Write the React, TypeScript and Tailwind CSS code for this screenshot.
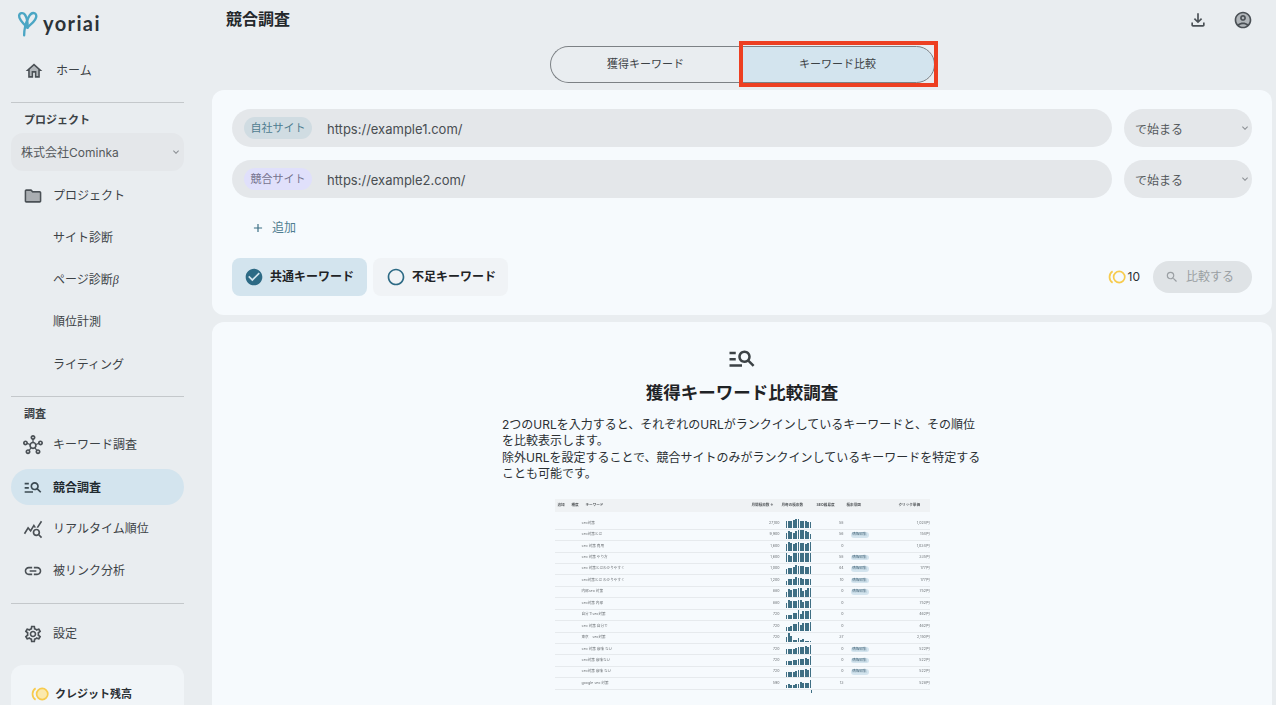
import { ReactNode } from 'react';
import {
  MdAdd,
  MdCheckCircle,
  MdExpandMore,
  MdLink,
  MdOutlineFileDownload,
  MdOutlineHub,
  MdOutlineManageSearch,
  MdOutlineQueryStats,
  MdOutlineSettings,
  MdRadioButtonUnchecked,
  MdSearch,
} from 'react-icons/md';

function HomeIcon() {
  return (
    <svg viewBox="0 0 24 24" className="w-[20px] h-[20px]" fill="#4a5055">
      <path opacity=".35" d="M12 5.69l-5 4.5V18h2v-6h6v6h2v-7.81z" />
      <path d="M12 3L2 12h3v8h6v-6h2v6h6v-8h3L12 3zm5 15h-2v-6H9v6H7v-7.81l5-4.5 5 4.5V18z" />
    </svg>
  );
}

function FolderIcon() {
  return (
    <svg viewBox="0 0 24 24" className="w-[20px] h-[20px]" fill="#4a5055">
      <path opacity=".4" d="M11.17 8l-.58-.59L9.17 6H4v12h16V8h-8z" />
      <path d="M20 6h-8l-2-2H4c-1.1 0-1.99.9-1.99 2L2 18c0 1.1.9 2 2 2h16c1.1 0 2-.9 2-2V8c0-1.1-.9-2-2-2zm0 12H4V6h5.17l1.41 1.41.59.59H20v10z" />
    </svg>
  );
}

function AccountIcon() {
  return (
    <svg viewBox="0 0 24 24" className="w-[20px] h-[20px]" fill="#4a5055">
      <circle cx="12" cy="12" r="9" opacity=".35" />
      <path d="M12 2C6.48 2 2 6.48 2 12s4.48 10 10 10 10-4.48 10-10S17.52 2 12 2zM7.35 18.5C8.66 17.56 10.26 17 12 17s3.34.56 4.65 1.5c-1.31.94-2.91 1.5-4.65 1.5s-3.34-.56-4.65-1.5zm10.79-1.38C16.45 15.8 14.32 15 12 15s-4.45.8-6.14 2.12C4.7 15.73 4 13.95 4 12c0-4.42 3.58-8 8-8s8 3.58 8 8c0 1.95-.7 3.73-1.86 5.12z" />
      <path d="M12 6c-1.93 0-3.5 1.57-3.5 3.5S10.07 13 12 13s3.5-1.57 3.5-3.5S13.93 6 12 6zm0 5c-.83 0-1.5-.67-1.5-1.5S11.17 8 12 8s1.5.67 1.5 1.5S12.83 11 12 11z" />
    </svg>
  );
}

function Coin({ fill }: { fill: string }) {
  return (
    <svg viewBox="0 0 18 14" className="w-[18px] h-[14px]" fill="none" stroke="#f7cb4d" strokeWidth="1.7">
      <circle cx="11.2" cy="7" r="5.6" fill={fill} />
      <path d="M4.6 1.2a7 7 0 0 0 0 11.6" />
    </svg>
  );
}

function Logo() {
  return (
    <div className="flex items-center gap-[5px] pl-[17px] h-[40px]">
      <svg viewBox="0 0 24 31" className="w-[21px] h-[26px] mt-[1px]" fill="none" stroke="#4ba6c4" strokeWidth="2.8" strokeLinecap="round" strokeLinejoin="round">
        <path d="M12 20C7 15 1.5 10 2 5.5C2.5 2 7 1.5 9 4.5C11 7.5 12.5 12 12 20" />
        <path d="M8 29C8 22 10 14 13 8C15 4 18 1.5 21 3C24 5 22 10 19 13C17 15 14 17 12 20" />
      </svg>
      <span className="text-[20px] font-bold leading-none text-[#2c3338] font-['Lato',sans-serif] tracking-[1.4px]">yoriai</span>
    </div>
  );
}

function NavItem({ icon, label, h = 'h-[42.3px]' }: { icon?: ReactNode; label: ReactNode; h?: string }) {
  return (
    <div className={`flex items-center mx-[11px] ${h} text-[#3c4246]`}>
      <div className="w-[42px] flex justify-center text-[#4a5055] text-[20px] shrink-0 pl-[2px]">{icon}</div>
      <span className="text-[12px]">{label}</span>
    </div>
  );
}

function Divider() {
  return <div className="mx-[11px] h-px bg-[#c4c8cb]" />;
}

function Sidebar() {
  return (
    <aside className="w-[195px] shrink-0 pt-[3px]">
      <Logo />
      <div className="mt-[7px]">
        <div className="flex items-center mx-[11px] h-[42px] text-[#3c4246]">
          <div className="w-[45px] flex justify-center"><HomeIcon /></div>
          <span className="text-[12px]">ホーム</span>
        </div>
      </div>
      <div className="mt-[10px]"><Divider /></div>
      <div className="pl-[24px] pt-[9px] text-[11px] leading-[16px] font-bold text-[#3c4246]">プロジェクト</div>
      <div className="mx-[11px] mt-[5px] h-[38px] rounded-xl bg-[#e4e7ea] flex items-center justify-between pl-[10px] pr-[2px] text-[12px] text-[#55595c]">
        <span className="pt-[1px]">株式会社Cominka</span>
        <MdExpandMore className="text-[12px] text-[#8b9094]" />
      </div>
      <div className="mt-[4px]">
        <NavItem icon={<FolderIcon />} label="プロジェクト" h="h-[42px]" />
        <NavItem label="サイト診断" h="h-[42px]" />
        <NavItem label={<>ページ診断<i className="font-['Liberation_Serif',serif]">β</i></>} h="h-[42px]" />
        <NavItem label="順位計測" h="h-[42px]" />
        <NavItem label="ライティング" h="h-[43px]" />
      </div>
      <div className="mt-[10px]"><Divider /></div>
      <div className="pl-[24px] pt-[9px] text-[11px] leading-[16px] font-bold text-[#3c4246]">調査</div>
      <div className="mt-[4px]">
        <NavItem icon={<MdOutlineHub />} label="キーワード調査" h="h-[38px]" />
        <div className="mt-[5px]">
          <div className="flex items-center mx-[11px] h-[36px] bg-[#d3e4ee] rounded-full font-bold text-[#1f2a30]">
            <div className="w-[42px] flex justify-center text-[#3c4a52] text-[20px] pl-[2px]"><MdOutlineManageSearch /></div>
            <span className="text-[12px] pt-[1px]">競合調査</span>
          </div>
        </div>
        <div className="mt-[3px]">
          <NavItem icon={<MdOutlineQueryStats />} label="リアルタイム順位" />
          <NavItem icon={<MdLink />} label="被リンク分析" />
        </div>
      </div>
      <div className="mt-[10px]"><Divider /></div>
      <div className="mt-[9px]">
        <NavItem icon={<MdOutlineSettings />} label="設定" />
      </div>
      <div className="mx-[11px] mt-[10px] h-[80px] rounded-t-xl bg-[#f1f5f8] flex items-start gap-[6px] pl-[20px] pt-[22px]">
        <Coin fill="#fbe9ad" />
        <span className="text-[11px] leading-[14px] font-bold text-[#2a2f33]">クレジット残高</span>
      </div>
    </aside>
  );
}

function UrlRow({ tag, tagClass, url }: { tag: string; tagClass: string; url: string }) {
  return (
    <div className="flex gap-[12px]">
      <div className="flex-1 h-[38px] rounded-full bg-[#e4e7ea] flex items-center pl-[12px]">
        <span className={`w-[68px] h-[22px] rounded-full flex items-center justify-center text-[11px] ${tagClass}`}>{tag}</span>
        <span className="ml-[15px] pt-[3px] text-[13px] text-[#494e52]">{url}</span>
      </div>
      <div className="w-[128px] h-[38px] rounded-full bg-[#e4e7ea] flex items-center justify-between pl-[11px] pr-[1px] text-[12px] text-[#55595c]">
        <span className="pt-[3px]">で始まる</span>
        <MdExpandMore className="text-[12px] text-[#8b9094]" />
      </div>
    </div>
  );
}

type Row = [string, string, string, boolean, string, number[]];

const rows: Row[] = [
  ['seo対策', '27,100', '58', false, '1,024円', [8, 8, 9, 10, 11, 11, 9, 9, 8, 7, 7]],
  ['seo対策とは', '9,900', '56', true, '154円', [8, 10, 9, 8, 10, 11, 11, 11, 10, 9, 7]],
  ['seo 対策 費用', '1,600', '0', false, '1,034円', [8, 11, 9, 8, 10, 11, 10, 9, 8, 9, 11]],
  ['seo 対策 やり方', '1,600', '58', true, '335円', [11, 9, 8, 11, 11, 11, 11, 11, 11, 11, 11]],
  ['seo 対策とはわかりやすく', '1,000', '44', true, '177円', [6, 7, 7, 8, 11, 9, 9, 9, 8, 8, 9]],
  ['seo対策とは わかりやすく', '1,200', '10', true, '177円', [5, 7, 7, 8, 10, 9, 9, 8, 7, 7, 8]],
  ['内部seo 対策', '880', '0', true, '752円', [6, 9, 8, 9, 9, 10, 10, 7, 8, 10, 11]],
  ['seo対策 内部', '880', '0', false, '752円', [6, 10, 9, 9, 9, 10, 10, 7, 8, 9, 11]],
  ['自分でseo対策', '720', '0', false, '462円', [5, 6, 6, 8, 8, 11, 7, 10, 10, 10, 11]],
  ['seo 対策 自分で', '720', '0', false, '462円', [5, 5, 6, 8, 8, 11, 7, 10, 10, 10, 11]],
  ['東京　seo対策', '720', '37', false, '2,150円', [6, 11, 8, 3, 3, 5, 3, 4, 2, 2, 2]],
  ['seo 対策 意味 ない', '720', '0', true, '522円', [6, 6, 6, 6, 7, 8, 8, 8, 10, 8, 11]],
  ['seo対策 意味ない', '720', '0', true, '522円', [5, 5, 5, 6, 6, 7, 8, 8, 9, 8, 11]],
  ['seo対策 意味 ない', '720', '0', true, '522円', [6, 6, 6, 6, 7, 8, 8, 8, 9, 8, 11]],
  ['google seo 対策', '590', '13', false, '528円', [4, 5, 4, 4, 5, 5, 7, 6, 6, 6, 10]],
];

function Preview() {
  return (
    <div className="w-[375px] h-[194px] overflow-hidden text-[3.6px] text-[#6a6f73] blur-[0.3px] mx-auto mt-[17px]">
      <div className="h-[13px] bg-[#eff2f4] flex items-center font-bold text-[#55595c] whitespace-nowrap">
        <span className="w-[14px] ml-[3px]">追加</span>
        <span className="w-[14px]">種度</span>
        <span className="w-[166px]">キーワード</span>
        <span className="w-[30px]">月間検索数 ↓</span>
        <span className="w-[35px]">月毎の検索数</span>
        <span className="w-[30px]">SEO難易度</span>
        <span className="w-[52px]">検索意図</span>
        <span className="w-[21px]">クリック単価</span>
      </div>
      <div className="mt-[6px]">
        {rows.map((r) => (
          <div key={r[0]} className="h-[11.45px] border-b border-[#e6eaed] flex items-center pl-[27px]">
            <span className="flex-1">{r[0]}</span>
            <span className="w-[30px] text-right">{r[1]}</span>
            <div className="w-[26px] ml-[6px] flex items-end gap-[0.5px] h-[9px]">
              {r[5].map((b, i) => (
                <div key={i} className="flex-1 bg-[#3f6f84]" style={{ height: `${(b / 11) * 9}px` }} />
              ))}
            </div>
            <span className="w-[10px] ml-[22px] text-right">{r[2]}</span>
            <div className="w-[22px] ml-[7px]">
              {r[3] && <span className="block w-[18px] text-center rounded-sm bg-[#d3e4ee] text-[#33566a]">情報収集</span>}
            </div>
            <span className="w-[57px] text-right">{r[4]}</span>
          </div>
        ))}
        <div className="h-[3px] flex justify-end pr-[118px]">
          <div className="w-[1px] h-[3px] bg-[#3f6f84]" />
        </div>
      </div>
    </div>
  );
}

export default function App() {
  return (
    <div className="w-[1276px] h-[705px] overflow-hidden flex bg-[#e9edf0] text-[#1f2326] font-['Inter','Noto_Sans_CJK_JP',sans-serif]">
      <Sidebar />
      <main className="flex-1 min-w-0 pr-[4px] pl-[17px]">
        <header className="h-[40px] flex items-center justify-between pr-[19px] pl-[14px]">
          <h1 className="text-[16px] font-bold text-[#24282b] pb-[2px]">競合調査</h1>
          <div className="flex items-center gap-[25px] text-[#4a5055]">
            <MdOutlineFileDownload className="text-[20px]" />
            <AccountIcon />
          </div>
        </header>
        <div className="flex justify-center mt-[6px]">
          <div className="relative flex w-[385px] h-[37px] text-[11px] text-[#3c4246]">
            <div className="flex-1 rounded-l-full border border-r-0 border-[#7c8185] flex items-center justify-center pl-[2px]">獲得キーワード</div>
            <div className="w-[196px] rounded-r-full border border-[#7c8185] bg-[#d3e4ee] flex items-center justify-center pl-[2px]">キーワード比較</div>
            <div className="absolute left-[189px] top-[-5px] w-[199px] h-[46px] border-[4px] border-[#ed3f21]" />
          </div>
        </div>
        <section className="mt-[7px] h-[225px] rounded-xl bg-[#f6fafd] px-[20px] pt-[19px]">
          <div className="flex flex-col gap-[13px]">
            <UrlRow tag="自社サイト" tagClass="bg-[#d0dce2] text-[#4f7d90]" url="https://example1.com/" />
            <UrlRow tag="競合サイト" tagClass="bg-[#e0e0fb] text-[#77748f]" url="https://example2.com/" />
          </div>
          <div className="flex items-center mt-[20px] pl-[19px] h-[20px] text-[#4f7d90] text-[12px]">
            <MdAdd className="text-[14px] text-[#3b6e84]" />
            <span className="ml-[7px]">追加</span>
          </div>
          <div className="flex items-center justify-between mt-[20px]">
            <div className="flex gap-[6px]">
              <div className="w-[135px] h-[38px] rounded-lg bg-[#d3e4ee] flex items-center pl-[12px] gap-[6px] text-[12px] font-bold">
                <MdCheckCircle className="text-[20px] text-[#2d6a85]" />
                <span>共通キーワード</span>
              </div>
              <div className="w-[135px] h-[38px] rounded-lg bg-[#f0f3f6] flex items-center pl-[13px] gap-[6px] text-[12px] font-bold">
                <MdRadioButtonUnchecked className="text-[20px] text-[#2d6a85]" />
                <span>不足キーワード</span>
              </div>
            </div>
            <div className="flex items-center">
              <Coin fill="none" />
              <span className="text-[12px] text-[#2a2f33] ml-[2px]">10</span>
              <div className="ml-[13px] w-[99px] h-[32px] rounded-full bg-[#dfe3e6] flex items-center pl-[12px] text-[#9a9fa3] text-[12px]">
                <MdSearch className="text-[14px]" />
                <span className="ml-[7px]">比較する</span>
              </div>
            </div>
          </div>
        </section>
        <section className="mt-[7px] h-[400px] rounded-xl bg-[#f6fafd] pt-[21px]">
          <div className="flex justify-center text-[#3c4246]">
            <MdOutlineManageSearch className="text-[30px]" />
          </div>
          <h2 className="text-center text-[17.5px] leading-[26px] font-bold text-[#1f2326] mt-[7px]">獲得キーワード比較調査</h2>
          <p className="w-[480px] mx-auto mt-[11px] text-[12px] leading-[16.3px] text-[#2a2f33]">
            2つのURLを入力すると、それぞれのURLがランクインしているキーワードと、その順位を比較表示します。
            <br />
            除外URLを設定することで、競合サイトのみがランクインしているキーワードを特定することも可能です。
          </p>
          <Preview />
        </section>
      </main>
    </div>
  );
}
